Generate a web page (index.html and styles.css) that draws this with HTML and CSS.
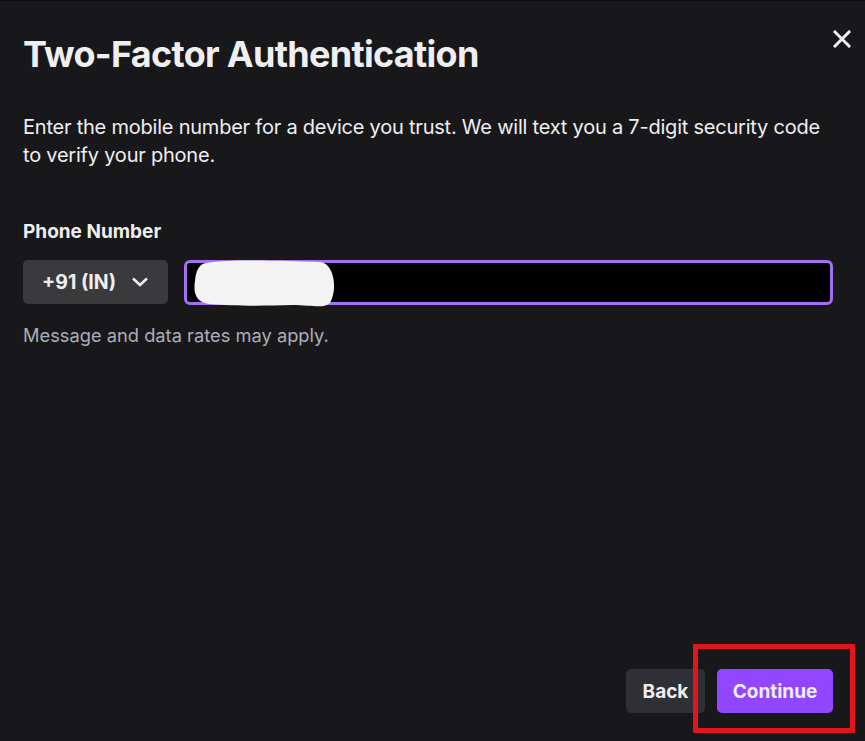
FILE: index.html
```html
<!DOCTYPE html>
<html>
<head>
<meta charset="utf-8">
<link rel="stylesheet" href="styles.css">
</head>
<body>
<div class="modal">
  <div class="header">
    <h1 class="title">Two-Factor Authentication</h1>
    <button class="close" aria-label="Close">
      <svg width="18" height="18" viewBox="0 0 18 18"><path d="M2 2 L16 16 M16 2 L2 16" stroke="#efeff1" stroke-width="3" stroke-linecap="square"/></svg>
    </button>
  </div>
  <p class="desc">Enter the mobile number for a device you trust. We will text you a 7-digit security code to verify your phone.</p>
  <label class="label">Phone Number</label>
  <div class="phone-row">
    <button class="country">+91 (IN)
      <svg class="chev" width="18" height="12" viewBox="0 0 18 12"><path d="M2 2.5 L9 9 L16 2.5" fill="none" stroke="#efeff1" stroke-width="2.6"/></svg>
    </button>
    <div class="input">
      <svg class="blob" width="144" height="50" viewBox="0 0 144 50"><path d="M14 4 C40 0 90 2 128 3 C142 4 146 30 138 44 C132 50 120 46 100 46 C70 47 40 47 18 45 C4 44 1 34 3 22 C4 10 8 5 14 4 Z" fill="#f3f3f3"/></svg>
    </div>
  </div>
  <p class="hint">Message and data rates may apply.</p>
  <div class="footer">
    <button class="btn back">Back</button>
    <button class="btn continue">Continue</button>
  </div>
  <div class="annot"></div>
</div>
</body>
</html>
```
FILE: styles.css
```css
html, body { margin: 0; padding: 0; background: #18181b; }
.modal {
  position: relative;
  box-sizing: border-box;
  width: 865px;
  height: 741px;
  background: #18181b;
  border-top: 1px solid #0e0e10;
  padding: 0 32px 28px 23px;
  display: flex;
  flex-direction: column;
  font-family: Inter, "Noto Sans", sans-serif;
  color: #efeff1;
}
.header { display: flex; justify-content: space-between; align-items: flex-start; }
.title {
  margin: 30px 0 0 0;
  font-size: 36px;
  font-weight: 700;
  letter-spacing: -0.7px;
  line-height: 46px;
}
.close {
  background: none; border: 0; padding: 0;
  margin: 29px -18px 0 0;
  width: 18px; height: 18px; display: flex;
}
.desc {
  margin: 36px 0 0 0;
  font-size: 20px;
  line-height: 28px;
  letter-spacing: -0.22px;
  color: #efeff1;
}
.label {
  margin-top: 51px;
  font-size: 19px;
  font-weight: 700;
  line-height: 24px;
}
.phone-row { display: flex; gap: 16px; margin-top: 16px; }
.country {
  width: 145px; height: 44px;
  background: #3a3a3d;
  border: 0; border-radius: 5px;
  color: #efeff1;
  font-family: Inter, sans-serif;
  font-size: 19.5px; font-weight: 700;
  display: flex; align-items: center; justify-content: center; gap: 15px;
  padding: 0;
}
.input {
  position: relative;
  flex: 1;
  height: 45px;
  box-sizing: border-box;
  background: #000;
  border: 3px solid #a371ef;
  border-radius: 6px;
}
.blob { position: absolute; left: 5px; top: -4px; }
.hint {
  margin: 18px 0 0 0;
  font-size: 18.3px;
  line-height: 24px;
  color: #adadb8;
}
.footer { margin-top: auto; display: flex; justify-content: flex-end; gap: 12px; }
.btn {
  height: 44px; border: 0; border-radius: 5px;
  font-family: Inter, sans-serif; font-size: 19px; font-weight: 700;
  color: #efeff1; padding: 0;
}
.back { width: 79px; background: #2f2f35; }
.continue { width: 116px; background: #9147ff; }
.annot {
  position: absolute;
  left: 693px; top: 643px;
  width: 152px; height: 79px;
  border: 5px solid #e0161f;
}
```
